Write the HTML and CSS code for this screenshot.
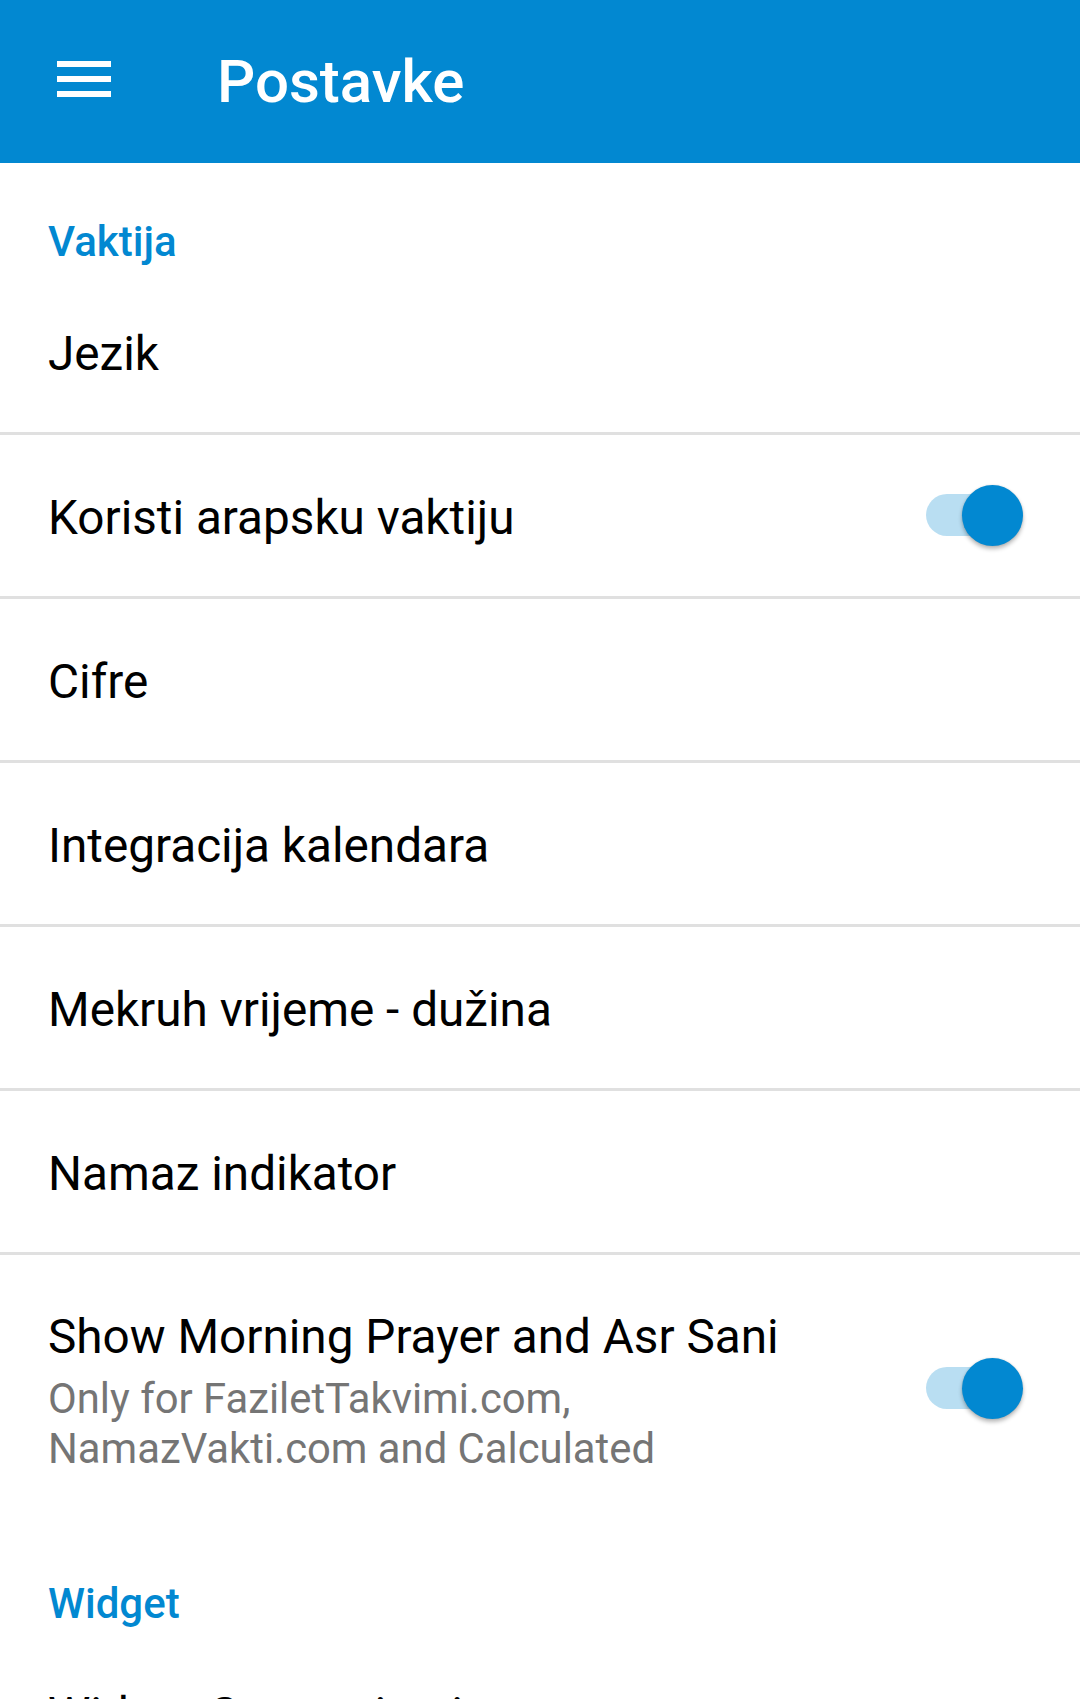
FILE: index.html
```html
<!DOCTYPE html>
<html lang="bs">
<head>
<meta charset="utf-8">
<title>Postavke</title>
<link rel="stylesheet" href="styles.css">
</head>
<body>
<div class="app">
  <header class="toolbar">
    <button class="menu-btn" aria-label="Menu">
      <svg width="54" height="36" viewBox="0 0 54 36"><rect x="0" y="0" width="54" height="6" fill="#fff"/><rect x="0" y="15" width="54" height="6" fill="#fff"/><rect x="0" y="30" width="54" height="6" fill="#fff"/></svg>
    </button>
    <h1 class="toolbar-title">Postavke</h1>
  </header>
  <main class="prefs">
    <div class="category">Vaktija</div>
    <div class="pref divided"><div class="pref-text"><div class="pref-title">Jezik</div></div></div>
    <div class="pref divided">
      <div class="pref-text"><div class="pref-title">Koristi arapsku vaktiju</div></div>
      <div class="switch on"><span class="track"></span><span class="thumb"></span></div>
    </div>
    <div class="pref divided"><div class="pref-text"><div class="pref-title">Cifre</div></div></div>
    <div class="pref divided"><div class="pref-text"><div class="pref-title">Integracija kalendara</div></div></div>
    <div class="pref divided"><div class="pref-text"><div class="pref-title">Mekruh vrijeme - dužina</div></div></div>
    <div class="pref divided"><div class="pref-text"><div class="pref-title">Namaz indikator</div></div></div>
    <div class="pref tall">
      <div class="pref-text">
        <div class="pref-title">Show Morning Prayer and Asr Sani</div>
        <div class="pref-summary">Only for FaziletTakvimi.com,<br>NamazVakti.com and Calculated</div>
      </div>
      <div class="switch on"><span class="track"></span><span class="thumb"></span></div>
    </div>
    <div class="category">Widget</div>
    <div class="pref divided"><div class="pref-text"><div class="pref-title">Widget Customization</div></div></div>
  </main>
</div>
</body>
</html>
```
FILE: styles.css
```css
* { box-sizing: border-box; }
html, body { margin: 0; padding: 0; }
body {
  width: 1080px;
  height: 1699px;
  overflow: hidden;
  background: #ffffff;
  font-family: Roboto, "Noto Sans", "Liberation Sans", sans-serif;
  color: #000;
}
.toolbar {
  height: 163px;
  background: #0288d1;
  display: flex;
  align-items: center;
}
.menu-btn {
  border: 0;
  background: transparent;
  padding: 0;
  margin: -5px 0 0 57px;
  width: 54px;
  height: 36px;
  display: flex;
}
.toolbar-title {
  margin: 0 0 0 106px;
  color: #fff;
  font-size: 60px;
  font-weight: 500;
  line-height: 70px;
}
.prefs { display: flex; flex-direction: column; }
.category {
  padding: 54px 48px 4px 48px;
  font-size: 42px;
  line-height: 50px;
  font-weight: 500;
  color: #0288d1;
}
.pref {
  display: flex;
  align-items: center;
  padding: 4px 57px 0 48px;
  height: 164px;
}
.pref.divided { border-bottom: 3px solid #e0e0e0; }
.pref.tall { height: auto; padding-top: 54px; padding-bottom: 51px; }
.pref-text { flex: 1; display: flex; flex-direction: column; }
.pref-title {
  font-size: 47.7px;
  line-height: 56px;
  color: #000;
}
.pref-summary {
  margin-top: 8.5px;
  font-size: 41.8px;
  line-height: 50px;
  color: #757575;
}
.switch {
  position: relative;
  width: 97px;
  height: 61px;
  flex: none;
  margin-top: -4px;
}
.pref.tall .switch { margin-top: -6px; }
.switch .track {
  position: absolute;
  left: 0;
  top: 9px;
  width: 84px;
  height: 42px;
  border-radius: 21px;
  background: #b9def2;
}
.switch .thumb {
  position: absolute;
  right: 0;
  top: 0;
  width: 61px;
  height: 61px;
  border-radius: 50%;
  background: #0288d1;
  box-shadow: 0 3px 4px rgba(0,0,0,0.28), 0 0 2px rgba(0,0,0,0.12);
}
```
